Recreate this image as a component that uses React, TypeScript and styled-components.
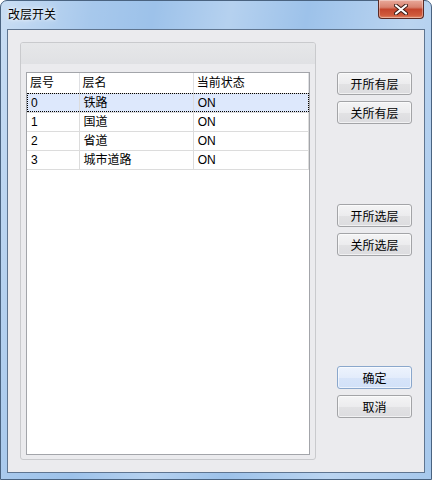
import React from 'react'
import styled, { createGlobalStyle } from 'styled-components'

const GlobalStyle = createGlobalStyle`
  html, body {
    margin: 0;
    padding: 0;
    width: 432px;
    height: 480px;
    overflow: hidden;
    background: #ffffff;
  }
  * { box-sizing: border-box; }
`

const Window = styled.div`
  width: 432px;
  height: 480px;
  display: flex;
  flex-direction: column;
  border: 1px solid #4a6380;
  border-radius: 7px 7px 0 0;
  background:
    linear-gradient(100deg, rgba(255,255,255,0.45) 0%, rgba(255,255,255,0.1) 18%, rgba(255,255,255,0) 30%, rgba(255,255,255,0.25) 45%, rgba(255,255,255,0) 60%, rgba(255,255,255,0.3) 80%, rgba(255,255,255,0.1) 100%),
    #9dc2ea;
  font-family: "Liberation Sans", "Noto Sans CJK SC", sans-serif;
  font-size: 12px;
  color: #000;
  padding: 0 6px 6px 6px;
`

const TitleBar = styled.div`
  height: 28px;
  display: flex;
  align-items: flex-start;
  justify-content: space-between;
`

const Title = styled.div`
  padding: 7px 0 0 1px;
  font-size: 12px;
  line-height: 14px;
  color: #000;
  text-shadow: 0 0 6px rgba(255,255,255,0.95), 0 0 3px rgba(255,255,255,0.9);
`

const CloseButton = styled.div`
  width: 46px;
  height: 19px;
  margin-top: -1px;
  margin-right: 1px;
  border: 1px solid #5b2a24;
  border-top: none;
  border-radius: 0 0 4px 4px;
  background: linear-gradient(#e9a99b 0%, #d8826f 40%, #c4452d 52%, #d05a3c 85%, #e28a6a 100%);
  box-shadow: inset 0 0 0 1px rgba(255,255,255,0.35);
  display: flex;
  align-items: center;
  justify-content: center;
`

const Client = styled.div`
  flex: 1;
  display: flex;
  gap: 21px;
  padding: 12px 12px 12px 12px;
  border: 1px solid #5f7590;
  background: #ebebee;
`

const Panel = styled.div`
  width: 296px;
  display: flex;
  flex-direction: column;
  border: 1px solid #c9cacd;
  border-radius: 3px;
  background: #ebebee;
`

const PanelHeader = styled.div`
  height: 21px;
  background: linear-gradient(#e6e7e9, #e0e1e4);
  border-radius: 2px 2px 0 0;
`

const ListView = styled.div`
  flex: 1;
  margin: 8px 5px 4px 5px;
  border: 1px solid #a3a5aa;
  background: #fff;
`

const Table = styled.table`
  border-collapse: collapse;
  table-layout: fixed;
  width: 282px;
`

const HeadCell = styled.th<{ w: number }>`
  width: ${p => p.w}px;
  height: 20px;
  padding: 0 0 0 3px;
  text-align: left;
  font-weight: normal;
  border-right: 1px solid #dfe0e3;
  border-bottom: 1px solid #d5d5d5;
  white-space: nowrap;
  line-height: 18px;
`

const Row = styled.tr<{ selected?: boolean }>`
  background: ${p => (p.selected ? '#dde8fc' : '#fff')};
  outline: ${p => (p.selected ? '1px dotted #000' : 'none')};
  outline-offset: -1px;
`

const Cell = styled.td`
  height: 19px;
  padding: 0 0 0 4px;
  border-right: 1px solid #dcdcdc;
  border-bottom: 1px solid #dcdcdc;
  white-space: nowrap;
  line-height: 18px;
`

const ButtonColumn = styled.div`
  width: 75px;
  display: flex;
  flex-direction: column;
  padding-top: 30px;
`

const Group = styled.div<{ top: number }>`
  display: flex;
  flex-direction: column;
  gap: 6px;
  margin-top: ${p => p.top}px;
`

const Button = styled.div<{ primary?: boolean }>`
  width: 75px;
  height: 23px;
  display: flex;
  align-items: center;
  justify-content: center;
  border: 1px solid ${p => (p.primary ? '#8aa7cc' : '#a3a4a7')};
  border-radius: 3px;
  background: ${p =>
    p.primary
      ? 'linear-gradient(#edf3fd 0%, #e3ecfb 50%, #d7e4f9 51%, #d2e1f8 100%)'
      : 'linear-gradient(#f4f4f5 0%, #ececee 50%, #e2e2e4 51%, #dcdcdf 100%)'};
  box-shadow: inset 0 0 0 1px rgba(255,255,255,0.6);
  font-size: 12px;
`

const rows = [
  { id: '0', name: '铁路', state: 'ON' },
  { id: '1', name: '国道', state: 'ON' },
  { id: '2', name: '省道', state: 'ON' },
  { id: '3', name: '城市道路', state: 'ON' },
]

export default function App() {
  return (
    <>
      <GlobalStyle />
      <Window>
        <TitleBar>
          <Title>改层开关</Title>
          <CloseButton>
            <svg width="14" height="11" viewBox="0 0 14 11">
              <path
                d="M2 1.5 L12 9.5 M12 1.5 L2 9.5"
                stroke="#3a1a14"
                strokeWidth="4"
                strokeLinecap="round"
              />
              <path
                d="M2 1.5 L12 9.5 M12 1.5 L2 9.5"
                stroke="#ffffff"
                strokeWidth="2.2"
                strokeLinecap="round"
              />
            </svg>
          </CloseButton>
        </TitleBar>
        <Client>
          <Panel>
            <PanelHeader />
            <ListView>
              <Table>
                <thead>
                  <tr>
                    <HeadCell w={52}>层号</HeadCell>
                    <HeadCell w={114}>层名</HeadCell>
                    <HeadCell w={115}>当前状态</HeadCell>
                  </tr>
                </thead>
                <tbody>
                  {rows.map((r, i) => (
                    <Row key={r.id} selected={i === 0}>
                      <Cell>{r.id}</Cell>
                      <Cell>{r.name}</Cell>
                      <Cell>{r.state}</Cell>
                    </Row>
                  ))}
                </tbody>
              </Table>
            </ListView>
          </Panel>
          <ButtonColumn>
            <Group top={0}>
              <Button>开所有层</Button>
              <Button>关所有层</Button>
            </Group>
            <Group top={80}>
              <Button>开所选层</Button>
              <Button>关所选层</Button>
            </Group>
            <Group top={110}>
              <Button primary>确定</Button>
              <Button>取消</Button>
            </Group>
          </ButtonColumn>
        </Client>
      </Window>
    </>
  )
}
